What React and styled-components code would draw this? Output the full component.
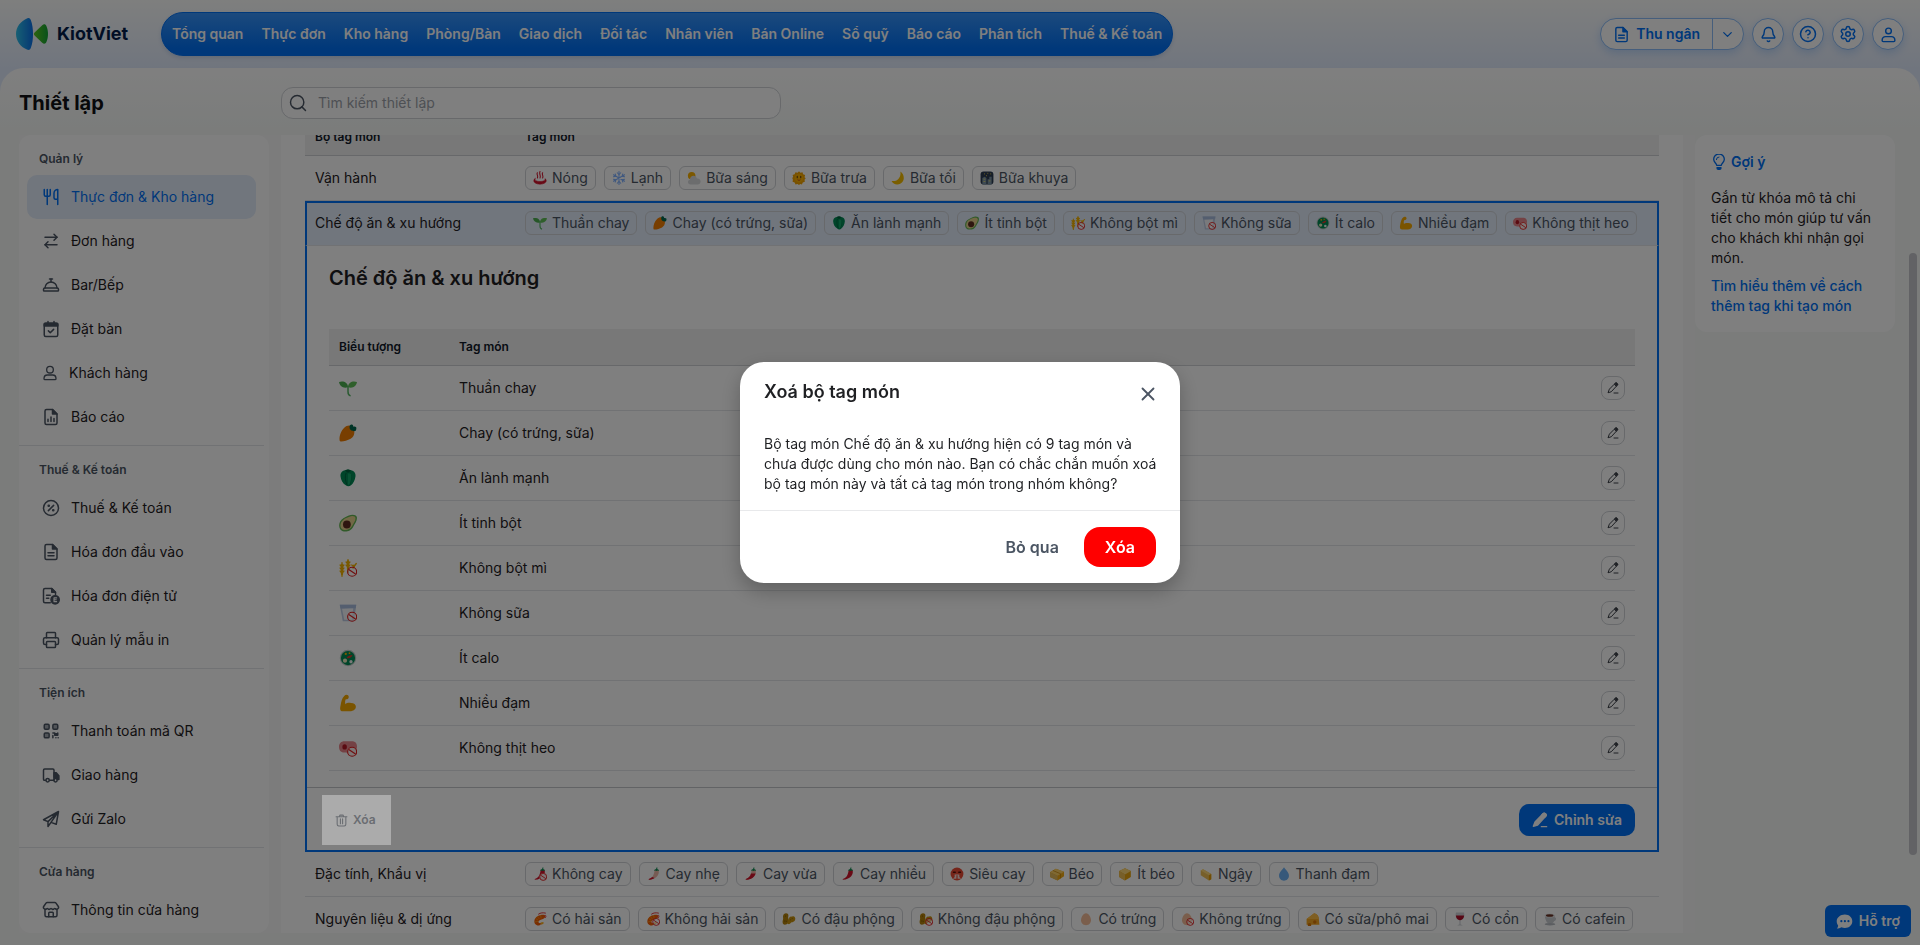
import React from 'react';
import styled, { createGlobalStyle, css } from 'styled-components';
import {
    ArrowRightLeft,
    Bell,
    ChevronDown,
    CircleHelp,
    ConciergeBell,
    Printer,
    Search,
    Settings,
    Store,
    Utensils,
    X,
} from 'lucide-react';

const GlobalStyle = createGlobalStyle`
    * {
        box-sizing: border-box;
    }
    body {
        margin: 0;
        font-family: Inter, 'Noto Sans', sans-serif;
        font-size: 14px;
        line-height: 20px;
        color: #1f2023;
    }
    button, input {
        font: inherit;
    }
    button {
        cursor: pointer;
    }
    a {
        text-decoration: none;
    }
`;

const blue = '#0070f4';
const slate = '#4b5563';

/* ---------- line icons ---------- */

const LineSvg = styled.svg.attrs({ viewBox: '0 0 24 24' })`
    width: ${({ $size = 18 }) => $size}px;
    height: ${({ $size = 18 }) => $size}px;
    flex: none;
    fill: none;
    stroke: currentColor;
    stroke-width: 2;
    stroke-linecap: round;
    stroke-linejoin: round;
    .solid {
        fill: currentColor;
    }
`;

const filePath = 'M14 2H6a2 2 0 0 0-2 2v16a2 2 0 0 0 2 2h12a2 2 0 0 0 2-2V8z';

const CalendarIcon = () => (
    <LineSvg>
        <rect x="3" y="4" width="18" height="18" rx="2" />
        <path className="solid" d="M3 5h18v3H3z" />
        <path d="M8 2v3M16 2v3M8.500 14.500l2.500 2.500 4.500-4.500" />
    </LineSvg>
);

const PersonIcon = ({ size, head = 5 }) => (
    <LineSvg $size={size}>
        <circle cx="12" cy="7" r={head} />
        <path d="M8 15h8c3 0 5 2.500 5 5.500 0 1-.6 1.500-1.500 1.500h-15C3.600 22 3 21.500 3 20.500 3 17.500 5 15 8 15z" />
    </LineSvg>
);

const ReportIcon = () => (
    <LineSvg>
        <path d={filePath} />
        <path className="solid" d="M14 2v6h6z" />
        <path d="M8 18v-3M12 18v-6M16 18v-4" />
    </LineSvg>
);

const PercentIcon = () => (
    <LineSvg>
        <circle cx="12" cy="12" r="10" />
        <path d="M15.500 8.500l-7 7" />
        <circle className="solid" cx="9" cy="9" r=".8" />
        <circle className="solid" cx="15" cy="15" r=".8" />
    </LineSvg>
);

const FileIcon = ({ size }) => (
    <LineSvg $size={size}>
        <path d={filePath} />
        <path className="solid" d="M14 2v6h6z" />
        <path d="M8 13h8M8 17h8" />
    </LineSvg>
);

const EInvoiceIcon = () => (
    <LineSvg>
        <path d="M11 21H4a2 2 0 0 1-2-2V4a2 2 0 0 1 2-2h9l5 5v3" />
        <path className="solid" d="M13 2v5h5z" />
        <path d="M6 11h5M6 15h3" />
        <circle className="solid" cx="17.500" cy="17" r="5.500" />
        <path d="M19.500 14.500h-3.500v5h3.500M16 17h3" stroke="#fff" strokeWidth="1.500" />
    </LineSvg>
);

const QrIcon = () => (
    <LineSvg>
        <rect x="3" y="3" width="6.500" height="6.500" rx="1.500" fill="#a3a8b0" />
        <rect x="14.500" y="3" width="6.500" height="6.500" rx="1.500" fill="#a3a8b0" />
        <rect x="3" y="14.500" width="6.500" height="6.500" rx="1.500" fill="#a3a8b0" />
        <path className="solid" d="M14.500 14.500h2.500v3h4v-3M14.500 18v3M18.500 21h.1M21.500 21h.1" />
    </LineSvg>
);

const TruckIcon = () => (
    <LineSvg>
        <path d="M5 19H3.500A1.500 1.500 0 0 1 2 17.500v-12A1.500 1.500 0 0 1 3.500 4h11A1.500 1.500 0 0 1 16 5.500V19h-6" />
        <path className="solid" d="M16 9h3l3.500 4v5H21l-2-3h-3z" />
        <circle cx="7.500" cy="19" r="2.200" />
        <circle cx="18" cy="19" r="2.200" />
    </LineSvg>
);

const PlaneIcon = () => (
    <LineSvg>
        <path d="M22 2L2 13l6 2.500L22 2l-3 17-7-2.500M8 15.500V22l4-5.500L22 2" />
    </LineSvg>
);

const TrashIcon = () => (
    <LineSvg $size={13}>
        <path d="M2 5h20M8 5l1-3h6l1 3M4 5v14a3 3 0 0 0 3 3h10a3 3 0 0 0 3-3V5M10 9v9M14 9v9" />
    </LineSvg>
);

const PencilIcon = ({ size = 14, solid }) => (
    <LineSvg $size={size}>
        <path
            className={solid ? 'solid' : ''}
            d="M15 4l1.500-1.500a2.500 2.500 0 0 1 3.500 0l.5.5a2.500 2.500 0 0 1 0 3.500L8.500 19.500 2 21.500 4.500 15z"
        />
        <path className="solid" d="M15 4l1.500-1.500a2.500 2.500 0 0 1 3.500 0l.5.5a2.500 2.500 0 0 1 0 3.500L19 8z" />
        <path d="M14 22h8" />
    </LineSvg>
);

const BulbIcon = () => (
    <LineSvg $size={16}>
        <path d="M8.500 17c0-3-4.500-4.500-4.500-9a8 8 0 0 1 16 0c0 4.500-4.500 6-4.500 9z" />
        <path d="M8 8.500a4 4 0 0 1 4-4" strokeWidth="1.500" />
        <path className="solid" d="M9 20.500h6v.5a2 2 0 0 1-2 2h-2a2 2 0 0 1-2-2z" />
    </LineSvg>
);

const ChatIcon = () => (
    <LineSvg $size={17}>
        <path
            className="solid"
            stroke="none"
            d="M12.500 2C18.500 2 23 6 23 11.500S18.500 21 12.500 21c-1.800 0-3.400-.4-4.800-1C6 21.300 3.500 22 1 22c1.500-1.500 2-3 2-4.500C1.700 15.800 1 13.800 1 11.500 1 6 6.500 2 12.500 2z"
        />
        <path d="M7.500 11.500h.1M12.500 11.500h.1M17.500 11.500h.1" stroke={blue} strokeWidth="3" />
    </LineSvg>
);

const LogoIcon = () => (
    <svg width="32" height="32" viewBox="0 0 32 32" aria-hidden="true">
        <defs>
            <linearGradient id="logoBlue" x1="0" x2="1">
                <stop offset="0" stopColor="#2fc0e8" />
                <stop offset="1" stopColor="#0a6fe8" />
            </linearGradient>
            <linearGradient id="logoGreen" x1="0" x2="1">
                <stop offset="0" stopColor="#5bc81e" />
                <stop offset="1" stopColor="#12a336" />
            </linearGradient>
        </defs>
        <path
            d="M11.500.2c1.700-.5 2.700.3 3.300 1.800 1.600 4 2.200 9 2.200 14s-.6 10-2.200 14c-.6 1.500-1.600 2.300-3.300 1.800C4.500 29 0 23 0 16S4.500 3 11.500.2z"
            fill="url(#logoBlue)"
        />
        <path
            d="M18.600 14.500l7.600-7.300c1.800-1.400 3.400-1 4.200.8 1.100 2.500 1.600 5.200 1.600 8s-.5 5.500-1.600 8c-.8 1.800-2.400 2.200-4.200.8l-7.600-7.300c-1-1-1-2 0-3z"
            fill="url(#logoGreen)"
        />
    </svg>
);

/* ---------- tag pictures ---------- */

const Ban = () => (
    <g fill="none" stroke="#e11d1d" strokeWidth="1.500">
        <circle cx="17.500" cy="17" r="6" fill="#fff" fillOpacity=".5" />
        <path d="M13 14l9 6" />
    </g>
);

const chiliBody = 'M13 6c1-2 6-2 7 0 1.500 6-2.500 15-17 16 0-1.500 0-1.500 1-2 6-2 8-7 9-14z';

const Chili = ({ body, tip }) => (
    <>
        <path d={chiliBody} fill={body} />
        {tip && <path d={tip} fill="#d3142c" />}
        <path d="M12.500 7c0-2.500 1.500-3 3-3l.8-3h1.600L17.500 4c2 0 3 1 3 3l-2-1-2 1-2-1z" fill="#0b8a50" />
    </>
);

const Shrimp = () => (
    <>
        <path
            d="M20 5C12 4 4 8 2.500 14c-1 5 2 9 7 9 3 0 5-2 5-4-4 1-6-1-5-3 1-3 6-3 9-5 2-1 3-3 1.500-6z"
            fill="#f25c05"
        />
        <path d="M4 11l5 3M3 17l6-1M7 7l4 5M13 5l1 6" stroke="#ffa217" strokeWidth="1.200" />
        <path d="M13 18l5-1 0 3-4 2z" fill="#ffb01f" />
        <path d="M9 4c4-3 8-3 13-2M20 6c2-1 3 1 1 4" stroke="#e11d1d" strokeWidth="1.500" fill="none" />
    </>
);

const Peanut = () => (
    <>
        <path
            d="M3 4c3-3 8-2 8 2 0 2-1 3 0 5s1 8-3 10-7 0-7-4c0-3 1-4 1-6S1 7 3 4z"
            fill="#b5830a"
        />
        <path
            d="M22 9c2 3 0 7-3 8-2 1-3 0-4 2-2 3-6 2-6-1 0-4 2-4 3-6 0-3 2-5 5-4 2-1 4-1 5 1z"
            fill="#c9930f"
        />
        <path d="M6 6v2M5 14v3M8 15v2M14 14l2-2M18 11v1" stroke="#7a5504" strokeWidth="1.200" />
    </>
);

const Egg = () => <path d="M12 2c5 0 8.500 7 8.500 12 0 5-3.500 8.500-8.500 8.500S3.500 19 3.500 14C3.500 9 7 2 12 2z" fill="#f5bc98" />;

const emojiShapes = {
    hot: (
        <g fill="none" stroke="#d3142c" strokeWidth="1.800" strokeLinecap="round">
            <path d="M7.500 3c-2 3 2 5 0 9M12 1c-2 4 2 7 0 11M16.500 3c-2 3 2 5 0 9" />
            <path d="M3.500 13c-5 4-1 9.500 8.500 9.500S25.500 17 20.500 13c1 4-4 5-8.500 5s-9.500-1-8.500-5z" fill="#d3142c" strokeWidth="1" />
        </g>
    ),
    snow: (
        <g fill="none" stroke="#7fb0ff" strokeWidth="1.800" strokeLinecap="round">
            <path d="M12 1v22M2.500 6.500l19 11M21.500 6.500l-19 11" />
            <path d="M9 3l3 3 3-3M9 21l3-3 3 3M2.500 10L6.500 9l-1-4M21.500 14l-4 1 1 4M2.500 14l4 1-1 4M21.500 10l-4-1 1-4" />
        </g>
    ),
    morning: (
        <>
            <circle cx="8" cy="8" r="6.500" fill="#f9b000" />
            <path
                d="M6 23c-5 0-6-7-1-8 0-8 10-9 12-2 8-1 8 10 2 10z"
                fill="#d8dadd"
            />
        </>
    ),
    noon: (
        <>
            <path
                d="M12 .5l2.500 2.500L18 2l1 3.500L22.500 7l-1 3.500 2 2-2 2.500.5 3.500-3.500 1L17 23l-3-.8-2 1.600-2.500-1.600L6 23l-1.500-3.500-3.500-1L1.500 15 .5 12l1.500-2L1 7l3.500-1.500L6 2l3.500 1z"
                fill="#f2a200"
            />
            <circle cx="12" cy="12" r="7.500" fill="#ffb300" />
            <path d="M9 9v2.500M15 9v2.500" stroke="#5d3a10" strokeWidth="1.800" strokeLinecap="round" />
            <path d="M9.500 15c1.500 1.200 3.500 1.200 5 0" stroke="#c2361d" strokeWidth="1.400" fill="none" />
        </>
    ),
    moon: <path d="M16 1c9 6 8 21-5 22-4.500.2-8-2-10-6 9 2 17-6 15-16z" fill="#f5bd00" />,
    night: (
        <>
            <rect x="1" y="1" width="22" height="22" rx="5" fill="#2c3d52" />
            <path d="M4 23V12l4-2 3 2v11zM13 23v-9h3v-4h4v13z" fill="#7b93a6" />
            <path d="M7 5h1M13 4h1M11 8h1M18 5h1" stroke="#ffd84a" strokeWidth="2" />
            <path d="M6 14h3M6 18h3M15 17h3" stroke="#d9d06a" strokeWidth="1.500" />
        </>
    ),
    seedling: (
        <>
            <path d="M12 11C5 13 1 9 0 4c5-2 12 0 12 7z" fill="#4caf50" />
            <path d="M12 11c7 2 11-2 12-7-5-2-12 0-12 7z" fill="#5fbf57" />
            <path d="M12 9v8c0 3 1 5 3.500 5.500" stroke="#57b765" strokeWidth="2" fill="none" />
        </>
    ),
    carrot: (
        <>
            <path d="M7 5c4-4 10-4 12.500 1 2 5 1 11-4 13.500C11 22 4 24 1.500 23-.5 22 1 10 7 5z" fill="#f07d00" />
            <path d="M14 4c0-3 2-4 4-3 1 1 1 1.500 1 2.500 3-1 5 1 4 3 0 2-1 3-3 3-3 0-6-1.500-6-5.500z" fill="#00694f" />
        </>
    ),
    pepper: (
        <>
            <path d="M8 1.500c2-1 6-1 8 0 4 .5 6.500 4 6 8-.5 5-3 10-6 12-2 2-5 2-7 0-4-2-6.500-7-7-12-.4-4 2-7.500 6-8z" fill="#008a55" />
            <path d="M9.500 5c-2 5-1 11 1 16M15 5c2 5 1 11-1 16" stroke="#00603c" strokeWidth="1.200" fill="none" />
            <path d="M12 6h4c1 5 0 10-2 15h-2z" fill="#12a568" />
            <path d="M8 2l4-1.500L16 2l-3 2.500h-2z" fill="#00603c" />
        </>
    ),
    avocado: (
        <>
            <path d="M13 2c5-2 11-1 11 3 0 5-3 8-5 12-3 6-9 7-14 6C0 21-1 15 1.500 10 4 6 8 4 13 2z" fill="#63b552" />
            <path d="M14 3.500c4-1.500 8-.5 8 2 0 4-3 7-4.500 10.500-3 5-7.500 6-12 5C2 19.500 1 15 3 11c2-4 6-6 11-7.500z" fill="#e5d08d" />
            <circle cx="10.500" cy="14" r="5.200" fill="#5d2d20" />
        </>
    ),
    wheat: (
        <g>
            <g stroke="#f2b200" strokeWidth="3" strokeLinecap="round" fill="none">
                <path d="M4 8v12M12 3v10M20 9l-1 3" />
            </g>
            <g stroke="#f2b200" strokeWidth="1.800" strokeLinecap="round" fill="none">
                <path d="M1.500 8l2.500 3 2.500-3M1.500 12l2.500 3 2.500-3M1.500 16l2.500 3 2.500-3M4 5v18" />
                <path d="M9.500 4l2.500 3 2.500-3M9.500 8l2.500 3 2.500-3M12 1v17M17 8l3 2 3-4" />
            </g>
            <Ban />
        </g>
    ),
    milk: (
        <>
            <path d="M1 1h22l-3 22H5z" fill="#bccbe3" />
            <path d="M4 6l15-1-2 16H7z" fill="#f3f5f9" />
            <path d="M1 1h22l-.7 4.500-18 .5L2 6z" fill="#a9bddf" />
            <Ban />
        </>
    ),
    salad: (
        <>
            <circle cx="12" cy="12" r="11" fill="#c3ccc8" />
            <circle cx="12" cy="12" r="9.500" fill="#008a55" />
            <circle cx="9" cy="6.500" r="1.500" fill="#f2b200" />
            <circle cx="14" cy="5.500" r="1.200" fill="#f2b200" />
            <circle cx="8" cy="15.500" r="2.800" fill="#e9e6bb" />
            <circle cx="16" cy="17" r="2.200" fill="#f2f2f2" />
            <path d="M10 12c2-3 5-4 8-4-1 3-4 5-8 4z" fill="#e1352c" />
        </>
    ),
    arm: (
        <path
            d="M7 2.500C9 0 13 1 13 4c0 2-2 3.500-4 3-1 2-1 4-.5 6.500C10 12 13 11.500 16 12c4 0 6.500 2 6.500 5s-3 6-8 6H5c-3.500 0-4-3-3-7.500C3 10 4 5 7 2.500z"
            fill="#f5a800"
        />
    ),
    pork: (
        <>
            <path d="M7 3h10c5 0 7 3 7 7 0 5-3 9-8 9-4 0-5-1-9-1-5 0-7-3-7-8 0-4 3-7 7-7z" fill="#e8858a" />
            <ellipse cx="7.500" cy="10.500" rx="3" ry="3.500" fill="#b51624" />
            <circle cx="17.500" cy="17" r="6.500" fill="#f3d9da" />
            <Ban />
        </>
    ),
    chiliNone: (
        <>
            <Chili body="#d3142c" />
            <circle cx="17.500" cy="17" r="6.500" fill="#f0d5d7" />
            <Ban />
        </>
    ),
    chiliLight: <Chili body="#edb6a6" tip="M3 22c0-1.500 0-1.500 1-2 2-.6 3.500-1.500 5-3l4 2c-3 2-6 3-10 3z" />,
    chiliMedium: <Chili body="#edb6a6" tip="M3 22c0-1.500 0-1.500 1-2 5-2 7-5 8-9h8c-2 6-7 10.500-17 11z" />,
    chiliFull: <Chili body="#d3142c" />,
    spicy: (
        <>
            <circle cx="12" cy="12" r="11" fill="#ea4a35" />
            <path d="M6 9h3M15 9h3" stroke="#5b120b" strokeWidth="2.400" strokeLinecap="round" />
            <path d="M8 13h8v4l3 3H5l3-3z" fill="#f5dcd8" />
            <path d="M12 14v8" stroke="#ea4a35" strokeWidth="2" />
        </>
    ),
    butter: (
        <>
            <path d="M0 9l10-6 14 5v8l-11 7L0 17z" fill="#f2aa12" />
            <path d="M0 9l10-6 14 5-11 7z" fill="#ffd267" />
            <path d="M0 9l13 6v8L0 17z" fill="#e5bb5a" />
            <path d="M5 6l13 5.500v8" stroke="#c88607" strokeWidth="1.300" fill="none" />
        </>
    ),
    cube: (
        <>
            <path d="M2 7l10-5 10 5v10l-10 6L2 17z" fill="#e9a50f" />
            <path d="M2 7l10-5 10 5-10 6z" fill="#ffd978" />
            <path d="M2 7l10 6v10L2 17z" fill="#eebf55" />
        </>
    ),
    slab: (
        <>
            <path d="M3 6l4-2 14 8v9l-4 2L3 14z" fill="#eebf55" />
            <path d="M7 4l14 8-4 2L3 6z" fill="#ffd978" />
            <path d="M21 12v9l-4 2v-9z" fill="#e39a08" />
        </>
    ),
    drop: <path d="M12 .5c4 6 8.500 9 8.500 14.500 0 5-4 8.500-8.500 8.500S3.500 20 3.500 15C3.500 9.500 8 6.500 12 .5z" fill="#6db1f5" />,
    shrimp: <Shrimp />,
    shrimpNone: (
        <>
            <Shrimp />
            <Ban />
        </>
    ),
    peanut: <Peanut />,
    peanutNone: (
        <>
            <Peanut />
            <Ban />
        </>
    ),
    egg: <Egg />,
    eggNone: (
        <>
            <Egg />
            <Ban />
        </>
    ),
    cheese: (
        <>
            <path d="M1 12L14 2c5 1 8 5 8 10l1 10H1z" fill="#f5a623" />
            <path d="M1 12L14 2c5 1 8 5 8 10z" fill="#ffbf47" />
            <circle cx="15" cy="17" r="3" fill="#d97706" />
            <circle cx="6" cy="22" r="3" fill="#d97706" />
        </>
    ),
    wine: (
        <>
            <path d="M5 1h14c2 8-2 13-6 13v7l4 2H7l4-2v-7C7 14 3 9 5 1z" fill="#cfd3d8" />
            <path d="M5 6h14c0 4-3 8-7 8s-7-4-7-8z" fill="#b10e2a" />
        </>
    ),
    coffee: (
        <>
            <path d="M3 5h17v4c3 0 4 5-1 7-1 3-3 4-7 4s-8-3-9-15z" fill="#c9ccd1" />
            <ellipse cx="11.500" cy="6" rx="8.500" ry="3.500" fill="#e6e8eb" />
            <ellipse cx="11.500" cy="6" rx="6.500" ry="2.300" fill="#6b3324" />
            <ellipse cx="12" cy="21" rx="9" ry="2" fill="#b9bdc3" />
        </>
    ),
};

const Emoji = ({ name, size = 14 }) => (
    <svg width={size} height={size} viewBox="0 0 24 24" aria-hidden="true">
        {emojiShapes[name]}
    </svg>
);

/* ---------- page data ---------- */

const navItems = [
    'Tổng quan',
    'Thực đơn',
    'Kho hàng',
    'Phòng/Bàn',
    'Giao dịch',
    'Đối tác',
    'Nhân viên',
    'Bán Online',
    'Sổ quỹ',
    'Báo cáo',
    'Phân tích',
    'Thuế & Kế toán',
];

const menuGroups = [
    {
        title: 'Quản lý',
        items: [
            { label: 'Thực đơn & Kho hàng', icon: <Utensils size={18} />, active: true },
            { label: 'Đơn hàng', icon: <ArrowRightLeft size={18} /> },
            { label: 'Bar/Bếp', icon: <ConciergeBell size={18} /> },
            { label: 'Đặt bàn', icon: <CalendarIcon /> },
            { label: 'Khách hàng', icon: <PersonIcon size={16} /> },
            { label: 'Báo cáo', icon: <ReportIcon /> },
        ],
    },
    {
        title: 'Thuế & Kế toán',
        items: [
            { label: 'Thuế & Kế toán', icon: <PercentIcon /> },
            { label: 'Hóa đơn đầu vào', icon: <FileIcon /> },
            { label: 'Hóa đơn điện tử', icon: <EInvoiceIcon /> },
            { label: 'Quản lý mẫu in', icon: <Printer size={18} /> },
        ],
    },
    {
        title: 'Tiện ích',
        items: [
            { label: 'Thanh toán mã QR', icon: <QrIcon /> },
            { label: 'Giao hàng', icon: <TruckIcon /> },
            { label: 'Gửi Zalo', icon: <PlaneIcon /> },
        ],
    },
    {
        title: 'Cửa hàng',
        items: [{ label: 'Thông tin cửa hàng', icon: <Store size={18} /> }],
    },
];

const tagGroups = [
    {
        name: 'Vận hành',
        tags: [
            ['hot', 'Nóng'],
            ['snow', 'Lạnh'],
            ['morning', 'Bữa sáng'],
            ['noon', 'Bữa trưa'],
            ['moon', 'Bữa tối'],
            ['night', 'Bữa khuya'],
        ],
    },
    {
        name: 'Chế độ ăn & xu hướng',
        open: true,
        tags: [
            ['seedling', 'Thuần chay'],
            ['carrot', 'Chay (có trứng, sữa)'],
            ['pepper', 'Ăn lành mạnh'],
            ['avocado', 'Ít tinh bột'],
            ['wheat', 'Không bột mì'],
            ['milk', 'Không sữa'],
            ['salad', 'Ít calo'],
            ['arm', 'Nhiều đạm'],
            ['pork', 'Không thịt heo'],
        ],
    },
    {
        name: 'Đặc tính, Khẩu vị',
        tags: [
            ['chiliNone', 'Không cay'],
            ['chiliLight', 'Cay nhẹ'],
            ['chiliMedium', 'Cay vừa'],
            ['chiliFull', 'Cay nhiều'],
            ['spicy', 'Siêu cay'],
            ['butter', 'Béo'],
            ['cube', 'Ít béo'],
            ['slab', 'Ngậy'],
            ['drop', 'Thanh đạm'],
        ],
    },
    {
        name: 'Nguyên liệu & dị ứng',
        tags: [
            ['shrimp', 'Có hải sản'],
            ['shrimpNone', 'Không hải sản'],
            ['peanut', 'Có đậu phộng'],
            ['peanutNone', 'Không đậu phộng'],
            ['egg', 'Có trứng'],
            ['eggNone', 'Không trứng'],
            ['cheese', 'Có sữa/phô mai'],
            ['wine', 'Có cồn'],
            ['coffee', 'Có cafein'],
        ],
    },
];

/* ---------- header ---------- */

const Page = styled.div`
    display: flex;
    flex-direction: column;
    height: 100vh;
    overflow: hidden;
    background: #e1ebfc;
`;

const Header = styled.header`
    display: flex;
    align-items: center;
    flex: none;
    height: 68px;
    padding: 0 16px;
    background: linear-gradient(#fdfefd, #e1ebfc);
`;

const Logo = styled.a`
    display: flex;
    align-items: center;
    gap: 9px;
    width: 145px;
    color: #021c4a;
    font-size: 18px;
    font-weight: 700;
`;

const Nav = styled.nav`
    display: flex;
    align-items: center;
    gap: 18px;
    height: 44px;
    padding: 0 10px;
    border: 1px solid ${blue};
    border-radius: 22px;
    background: linear-gradient(#3894fb, ${blue} 85%);
    box-shadow: 0 2px 4px rgba(0, 60, 140, 0.15);
    a {
        color: #fff;
        font-weight: 600;
        white-space: nowrap;
    }
`;

const HeaderActions = styled.div`
    display: flex;
    gap: 8px;
    margin-left: auto;
    color: ${blue};
`;

const pill = css`
    border: 1px solid #8cbdf8;
    background: #fff;
    color: ${blue};
    box-shadow: 0 3px 8px rgba(0, 112, 244, 0.2);
`;

const Cashier = styled.div`
    ${pill}
    display: flex;
    height: 32px;
    border-radius: 16px;
    button {
        display: flex;
        align-items: center;
        gap: 6px;
        padding: 0 12px;
        border: 0;
        background: none;
        color: inherit;
        font-weight: 600;
    }
    button + button {
        padding: 0 8px 0 7px;
        border-left: 1px solid #8cbdf8;
    }
`;

const RoundButton = styled.button`
    ${pill}
    display: flex;
    align-items: center;
    justify-content: center;
    width: 32px;
    height: 32px;
    padding: 0;
    border-radius: 50%;
`;

/* ---------- body ---------- */

const Body = styled.main`
    display: flex;
    flex: 1;
    flex-direction: column;
    min-height: 0;
    padding: 0 25px 12px 19px;
    border-radius: 24px 24px 0 0;
    background: linear-gradient(#fff, #f6f9f7 60px);
`;

const TitleBar = styled.div`
    display: flex;
    align-items: center;
    flex: none;
    height: 67px;
    padding-top: 3px;
    h1 {
        width: 262px;
        margin: 0;
        color: #101114;
        font-size: 20px;
        font-weight: 700;
    }
`;

const SearchBox = styled.label`
    display: flex;
    align-items: center;
    gap: 10px;
    width: 500px;
    height: 32px;
    padding: 0 6px;
    border: 1px solid #d0d3d7;
    border-radius: 12px;
    background: #fff;
    color: ${slate};
    input {
        flex: 1;
        padding: 0;
        border: 0;
        outline: 0;
        background: none;
    }
    input::placeholder {
        color: #9ca1a9;
        opacity: 1;
    }
`;

const Columns = styled.div`
    display: flex;
    flex: 1;
    min-height: 0;
`;

const Workspace = styled.div`
    display: flex;
    flex: 1;
    gap: 12px;
    min-width: 0;
    padding-right: 12px;
    background: #f8f8f8;
`;

const Sidebar = styled.aside`
    flex: none;
    width: 250px;
    overflow: hidden;
    padding-right: 5px;
    border-radius: 12px;
    background: #fff;
`;

const MenuGroup = styled.section`
    padding: 12px 8px 6px;
    & + & {
        border-top: 1px solid #e3e5e8;
    }
    h2 {
        margin: 0 0 4px;
        padding: 0 12px;
        color: ${slate};
        font-size: 12px;
        font-weight: 600;
        line-height: 24px;
    }
`;

const MenuItem = styled.a`
    display: flex;
    align-items: center;
    gap: 11px;
    height: 44px;
    padding: 0 15px;
    border-radius: 10px;
    background: ${({ $active }) => ($active ? '#e2ecfb' : 'none')};
    color: ${({ $active }) => ($active ? blue : '#1f2023')};
    svg {
        color: ${({ $active }) => ($active ? blue : slate)};
    }
`;

const Content = styled.section`
    flex: 1;
    min-width: 0;
    overflow: hidden;
    padding: 0 24px;
    background: #fff;
`;

/* ---------- tables ---------- */

const Table = styled.table`
    width: 100%;
    border-spacing: 0;
    table-layout: fixed;
    th {
        height: 37px;
        padding: 0 10px;
        border-bottom: 1px solid #cfd1d4;
        background: #f0f0f0;
        color: #101828;
        font-size: 12px;
        font-weight: 600;
        text-align: left;
    }
`;

/* the list is scrolled, so its head is partly hidden under the title bar */
const GroupTable = styled(Table)`
    margin-top: -16px;
    th:first-child {
        width: 210px;
    }
`;

const GroupRow = styled.tr`
    td {
        padding: 10px;
        border-bottom: 1px solid #e3e5e8;
    }
    ${({ $open }) =>
        $open &&
        css`
            td {
                padding-top: 8px;
                border-top: 2px solid ${blue};
                background: #e2ecfb;
            }
            td:first-child {
                padding-left: 8px;
                border-left: 2px solid ${blue};
            }
            td:last-child {
                border-right: 2px solid ${blue};
            }
        `}
`;

const Tags = styled.div`
    display: flex;
    gap: 8px;
`;

const Tag = styled.span`
    display: flex;
    align-items: center;
    gap: 5px;
    height: 24px;
    padding: 0 7px;
    border: 1px solid #d0d3d7;
    border-radius: 6px;
    color: ${slate};
    white-space: nowrap;
`;

const DetailCell = styled.td`
    padding: 0;
    border: solid ${blue};
    border-width: 0 2px 2px;
`;

const Detail = styled.div`
    padding: 20px 22px 16px;
    h3 {
        margin: 0 0 39px;
        font-size: 20px;
        font-weight: 600;
        line-height: 24px;
    }
`;

const TagTable = styled(Table)`
    th:first-child {
        width: 120px;
    }
    th:last-child {
        width: 80px;
    }
    td {
        height: 45px;
        padding: 0 10px;
        border-bottom: 1px solid #e3e5e8;
    }
    svg {
        display: block;
    }
`;

const EditButton = styled.button`
    display: flex;
    align-items: center;
    justify-content: center;
    width: 24px;
    height: 24px;
    margin-left: auto;
    padding: 0;
    border: 1px solid #d0d3d7;
    border-radius: 8px;
    background: #fff;
    color: #3c4048;
`;

const DetailFooter = styled.div`
    display: flex;
    align-items: center;
    justify-content: space-between;
    padding: 7px 22px 5px 15px;
    border-top: 1px solid #c4c7cb;
`;

/* stays lit above the backdrop */
const DeleteButton = styled.button`
    position: relative;
    z-index: 11;
    display: flex;
    align-items: center;
    gap: 5px;
    height: 50px;
    padding: 0 15px 0 13px;
    border: 0;
    background: #ababab;
    color: #6a6d72;
    font-size: 12px;
    font-weight: 600;
`;

const PrimaryButton = styled.button`
    display: flex;
    align-items: center;
    gap: 6px;
    height: 32px;
    padding: 0 13px;
    border: 0;
    border-radius: 10px;
    background: ${blue};
    color: #fff;
    font-weight: 600;
`;

const Hint = styled.aside`
    flex: none;
    align-self: flex-start;
    width: 200px;
    padding: 16px;
    border-radius: 12px;
    background: #fff;
    h2 {
        display: flex;
        align-items: center;
        gap: 4px;
        margin: 0 0 15px;
        color: ${blue};
        font-size: 14px;
        font-weight: 600;
        line-height: 22px;
    }
    p {
        margin: 0 0 8px;
    }
    a {
        display: block;
        color: ${blue};
        font-weight: 500;
    }
`;

const ScrollThumb = styled.div`
    position: fixed;
    top: 253px;
    right: 3px;
    bottom: 90px;
    width: 8px;
    border-radius: 4px;
    background: #c4c4ca;
`;

const Support = styled(PrimaryButton)`
    position: fixed;
    right: 9px;
    bottom: 8px;
    padding: 0 11px;
    border-radius: 6px;
`;

/* ---------- dialog ---------- */

const Backdrop = styled.div`
    position: fixed;
    inset: 0;
    z-index: 10;
    display: flex;
    align-items: center;
    justify-content: center;
    background: rgba(0, 0, 0, 0.5);
`;

const Dialog = styled.div`
    width: 440px;
    border-radius: 24px;
    background: #fff;
    box-shadow: 0 8px 20px rgba(0, 0, 0, 0.25);
    header {
        display: flex;
        align-items: center;
        justify-content: space-between;
        height: 60px;
        padding: 0 21px 0 24px;
    }
    h2 {
        margin: 0;
        font-size: 18px;
        font-weight: 600;
    }
    p {
        margin: 0;
        padding: 12px 20px 16px 24px;
    }
    footer {
        display: flex;
        justify-content: flex-end;
        gap: 4px;
        padding: 16px 24px;
        border-top: 1px solid #e8e9eb;
    }
`;

const CloseButton = styled.button`
    display: flex;
    padding: 4px 0 0;
    border: 0;
    background: none;
    color: ${slate};
`;

const DialogButton = styled.button`
    height: 40px;
    padding: 0 21px;
    border: 0;
    border-radius: 16px;
    background: ${({ $danger }) => ($danger ? '#f00' : 'none')};
    color: ${({ $danger }) => ($danger ? '#fff' : slate)};
    font-size: 16px;
    font-weight: 600;
`;

function TopBar() {
    return (
        <Header>
            <Logo href="#">
                <LogoIcon />
                KiotViet
            </Logo>
            <Nav>
                {navItems.map((item) => (
                    <a key={item} href="#">
                        {item}
                    </a>
                ))}
            </Nav>
            <HeaderActions>
                <Cashier>
                    <button type="button">
                        <FileIcon size={17} />
                        Thu ngân
                    </button>
                    <button type="button" aria-label="Mở rộng">
                        <ChevronDown size={15} />
                    </button>
                </Cashier>
                <RoundButton aria-label="Thông báo">
                    <Bell size={17} />
                </RoundButton>
                <RoundButton aria-label="Trợ giúp">
                    <CircleHelp size={18} />
                </RoundButton>
                <RoundButton aria-label="Cài đặt">
                    <Settings size={18} />
                </RoundButton>
                <RoundButton aria-label="Tài khoản">
                    <PersonIcon size={17} head={4} />
                </RoundButton>
            </HeaderActions>
        </Header>
    );
}

function SideMenu() {
    return (
        <Sidebar>
            {menuGroups.map(({ title, items }) => (
                <MenuGroup key={title}>
                    <h2>{title}</h2>
                    {items.map(({ label, icon, active }) => (
                        <MenuItem key={label} href="#" $active={active}>
                            {icon}
                            {label}
                        </MenuItem>
                    ))}
                </MenuGroup>
            ))}
        </Sidebar>
    );
}

function GroupDetail({ name, tags }) {
    return (
        <tr>
            <DetailCell colSpan={2}>
                <Detail>
                    <h3>{name}</h3>
                    <TagTable>
                        <thead>
                            <tr>
                                <th>Biểu tượng</th>
                                <th>Tag món</th>
                                <th />
                            </tr>
                        </thead>
                        <tbody>
                            {tags.map(([icon, label]) => (
                                <tr key={label}>
                                    <td>
                                        <Emoji name={icon} size={18} />
                                    </td>
                                    <td>{label}</td>
                                    <td>
                                        <EditButton aria-label={`Sửa ${label}`}>
                                            <PencilIcon size={12} />
                                        </EditButton>
                                    </td>
                                </tr>
                            ))}
                        </tbody>
                    </TagTable>
                </Detail>
                <DetailFooter>
                    <DeleteButton>
                        <TrashIcon />
                        Xóa
                    </DeleteButton>
                    <PrimaryButton>
                        <PencilIcon size={16} solid />
                        Chỉnh sửa
                    </PrimaryButton>
                </DetailFooter>
            </DetailCell>
        </tr>
    );
}

function TagGroups() {
    return (
        <GroupTable>
            <thead>
                <tr>
                    <th>Bộ tag món</th>
                    <th>Tag món</th>
                </tr>
            </thead>
            <tbody>
                {tagGroups.map(({ name, tags, open }) => (
                    <React.Fragment key={name}>
                        <GroupRow $open={open}>
                            <td>{name}</td>
                            <td>
                                <Tags>
                                    {tags.map(([icon, label]) => (
                                        <Tag key={label}>
                                            <Emoji name={icon} />
                                            {label}
                                        </Tag>
                                    ))}
                                </Tags>
                            </td>
                        </GroupRow>
                        {open && <GroupDetail name={name} tags={tags} />}
                    </React.Fragment>
                ))}
            </tbody>
        </GroupTable>
    );
}

function DeleteDialog() {
    return (
        <Backdrop>
            <Dialog role="dialog" aria-modal="true" aria-labelledby="dialog-title">
                <header>
                    <h2 id="dialog-title">Xoá bộ tag món</h2>
                    <CloseButton aria-label="Đóng">
                        <X size={22} />
                    </CloseButton>
                </header>
                <p>
                    Bộ tag món Chế độ ăn & xu hướng hiện có 9 tag món và chưa được dùng cho
                    món nào. Bạn có chắc chắn muốn xoá bộ tag món này và tất cả tag món
                    trong nhóm không?
                </p>
                <footer>
                    <DialogButton>Bỏ qua</DialogButton>
                    <DialogButton $danger>Xóa</DialogButton>
                </footer>
            </Dialog>
        </Backdrop>
    );
}

function App() {
    return (
        <Page>
            <GlobalStyle />
            <TopBar />
            <Body>
                <TitleBar>
                    <h1>Thiết lập</h1>
                    <SearchBox>
                        <Search size={20} strokeWidth={1.75} />
                        <input type="text" placeholder="Tìm kiếm thiết lập" />
                    </SearchBox>
                </TitleBar>
                <Columns>
                    <Workspace>
                        <SideMenu />
                        <Content>
                            <TagGroups />
                        </Content>
                    </Workspace>
                    <Hint>
                        <h2>
                            <BulbIcon />
                            Gợi ý
                        </h2>
                        <p>Gắn từ khóa mô tả chi tiết cho món giúp tư vấn cho khách khi nhận gọi món.</p>
                        <a href="#">Tìm hiểu thêm về cách thêm tag khi tạo món</a>
                    </Hint>
                </Columns>
            </Body>
            <ScrollThumb />
            <Support>
                <ChatIcon />
                Hỗ trợ
            </Support>
            <DeleteDialog />
        </Page>
    );
}

export default App;
